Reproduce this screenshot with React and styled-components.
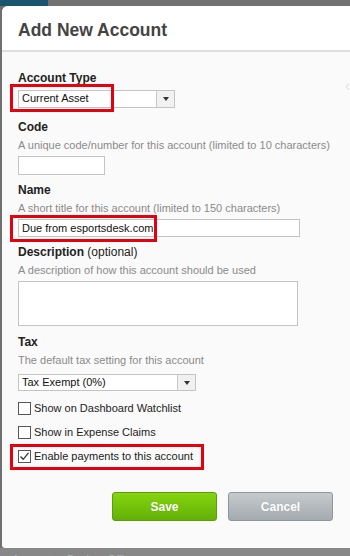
import styled, { createGlobalStyle } from "styled-components";

const GlobalStyle = createGlobalStyle`
  html, body {
    margin: 0;
    padding: 0;
    background: #6f6f6f;
  }
  body {
    font-family: "Liberation Sans", Arial, sans-serif;
    width: 350px;
    height: 556px;
    overflow: hidden;
  }
`;

const Backdrop = styled.div`
  display: flex;
  flex-direction: column;
  width: 350px;
  height: 556px;
  overflow: hidden;
  background: #707070;
`;

const TopStrip = styled.div`
  display: flex;
  height: 6px;
  flex-shrink: 0;
`;

const StripPart = styled.div`
  width: ${({ $w }) => $w};
  flex: ${({ $grow }) => ($grow ? 1 : "none")};
  background: ${({ $bg }) => $bg};
`;

const Modal = styled.div`
  display: flex;
  flex-direction: column;
  margin-left: 2px;
  width: 360px;
  height: 542px;
  flex-shrink: 0;
  background: #fafafa;
  border-top-left-radius: 6px;
  border-bottom-left-radius: 3px;
  overflow: hidden;
`;

const Header = styled.div`
  height: 46px;
  box-sizing: border-box;
  padding: 13px 0 0 16px;
  background: #fff;
  border-bottom: 2px solid #dedede;
`;

const Title = styled.h1`
  margin: 0;
  font-family: "Liberation Sans", Arial, sans-serif;
  font-size: 17.5px;
  font-weight: 700;
  line-height: 22px;
  color: #444;
`;

const Body = styled.div`
  position: relative;
  display: flex;
  flex-direction: column;
  padding: 19px 0 0 16px;
`;

const Field = styled.div`
  position: relative;
  display: flex;
  flex-direction: column;
  margin-bottom: ${({ $mb }) => $mb || "8px"};
`;

const Label = styled.div`
  font-size: 12px;
  font-weight: 700;
  line-height: 14px;
  color: #222;
`;

const Optional = styled.span`
  font-weight: 400;
`;

const Help = styled.div`
  margin-top: 5px;
  font-size: 11px;
  line-height: 13px;
  color: #8a8a8a;
`;

const Input = styled.div`
  box-sizing: border-box;
  width: ${({ $w }) => $w};
  height: ${({ $h }) => $h || "18px"};
  margin-top: ${({ $mt }) => $mt || "4px"};
  padding: 2px 3px;
  border: 1px solid #c4c4c4;
  background: #fff;
  font-size: 11px;
  line-height: 13px;
  color: #111;
`;

const Select = styled.div`
  display: flex;
  box-sizing: border-box;
  width: ${({ $w }) => $w};
  height: ${({ $h }) => $h || "18px"};
  margin-top: ${({ $mt }) => $mt || "4px"};
  border: 1px solid #c4c4c4;
  background: #fff;
  font-size: 11px;
  line-height: 15px;
  color: #111;
`;

const SelectText = styled.div`
  flex: 1;
  padding-left: 3px;
`;

const SelectButton = styled.div`
  display: flex;
  align-items: center;
  justify-content: center;
  width: 17px;
  border-left: 1px solid #c8c8c8;
  background: #f1f1f1;
`;

const Arrow = styled.div`
  width: 0;
  height: 0;
  border-left: 3.5px solid transparent;
  border-right: 3.5px solid transparent;
  border-top: 4px solid #333;
`;

const CheckRow = styled.label`
  position: relative;
  display: flex;
  align-items: center;
  gap: 3px;
  height: 13px;
  margin-bottom: ${({ $mb }) => $mb || "11px"};
  font-size: 11px;
  line-height: 13px;
  color: #222;
`;

const Box = styled.span`
  box-sizing: border-box;
  display: flex;
  align-items: center;
  justify-content: center;
  width: 13px;
  height: 13px;
  border: 1px solid #555;
  background: #fff;
`;

const Highlight = styled.div`
  position: absolute;
  left: ${({ $l }) => $l};
  top: ${({ $t }) => $t};
  width: ${({ $w }) => $w};
  height: ${({ $h }) => $h};
  box-sizing: border-box;
  border: 3px solid #e3000f;
  pointer-events: none;
`;

const Actions = styled.div`
  display: flex;
  gap: 11px;
  margin: 29px 0 0 94px;
`;

const Button = styled.button`
  box-sizing: border-box;
  width: 105px;
  height: 29px;
  border-radius: 3px;
  border: 1px solid ${({ $variant }) => ($variant === "save" ? "#5c9b0c" : "#8f969b")};
  background: ${({ $variant }) =>
    $variant === "save"
      ? "linear-gradient(#86d50f, #62b007)"
      : "linear-gradient(#c6cacd, #a4aaaf)"};
  color: #fff;
  font-family: "Liberation Sans", Arial, sans-serif;
  font-size: 12px;
  font-weight: 700;
  text-shadow: 0 0 1px rgba(0, 0, 0, 0.15);
  cursor: pointer;
`;

const SideChevron = styled.div`
  position: absolute;
  right: 12px;
  top: 25px;
  font-size: 16px;
  color: #e4e4e4;
`;

const BottomStrip = styled.div`
  flex: 1;
  background: #878787;
  padding: 5px 0 0 12px;
  font-size: 11px;
  line-height: 12px;
  color: #a9b2bb;
  overflow: hidden;
  white-space: nowrap;
`;

const CheckMark = () => (
  <svg width="11" height="11" viewBox="0 0 11 11">
    <path d="M1.5 5.5 L4.2 8.3 L9.5 1.8" fill="none" stroke="#333" strokeWidth="1.3" />
  </svg>
);

export default function App() {
  return (
    <>
      <GlobalStyle />
      <Backdrop>
        <TopStrip>
          <StripPart $w="48px" $bg="#1d5570" />
          <StripPart $grow $bg="#727272" />
        </TopStrip>
        <Modal>
          <Header>
            <Title>Add New Account</Title>
          </Header>
          <Body>
            <SideChevron>‹</SideChevron>
            <Field $mb="12px">
              <Label>Account Type</Label>
              <Select $w="157px" $mt="5px">
                <SelectText>Current Asset</SelectText>
                <SelectButton><Arrow /></SelectButton>
              </Select>
              <Highlight $l="-8px" $t="13px" $w="104px" $h="28px" />
            </Field>
            <Field>
              <Label>Code</Label>
              <Help>A unique code/number for this account (limited to 10 characters)</Help>
              <Input $w="87px" $h="19px" />
            </Field>
            <Field>
              <Label>Name</Label>
              <Help>A short title for this account (limited to 150 characters)</Help>
              <Input $w="282px">Due from esportsdesk.com</Input>
              <Highlight $l="-8px" $t="32px" $w="147px" $h="27px" />
            </Field>
            <Field $mb="9px">
              <Label>Description <Optional>(optional)</Optional></Label>
              <Help>A description of how this account should be used</Help>
              <Input $w="280px" $h="45px" />
            </Field>
            <Field $mb="11px">
              <Label>Tax</Label>
              <Help>The default tax setting for this account</Help>
              <Select $w="178px" $mt="7px" $h="17px">
                <SelectText>Tax Exempt (0%)</SelectText>
                <SelectButton><Arrow /></SelectButton>
              </Select>
            </Field>
            <CheckRow>
              <Box />
              Show on Dashboard Watchlist
            </CheckRow>
            <CheckRow>
              <Box />
              Show in Expense Claims
            </CheckRow>
            <CheckRow $mb="0">
              <Box><CheckMark /></Box>
              Enable payments to this account
              <Highlight $l="-8px" $t="-6px" $w="194px" $h="26px" />
            </CheckRow>
            <Actions>
              <Button $variant="save">Save</Button>
              <Button $variant="cancel">Cancel</Button>
            </Actions>
          </Body>
        </Modal>
        <BottomStrip>Account ... Bank ... Office ...</BottomStrip>
      </Backdrop>
    </>
  );
}
